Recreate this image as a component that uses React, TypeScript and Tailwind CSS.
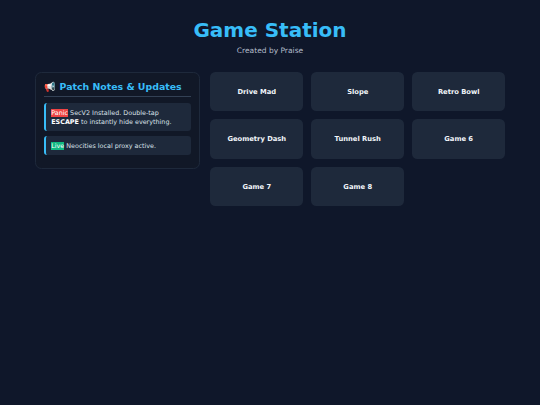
const games = [
  "Drive Mad",
  "Slope",
  "Retro Bowl",
  "Geometry Dash",
  "Tunnel Rush",
  "Game 6",
  "Game 7",
  "Game 8",
];

export default function App() {
  return (
    <div className="min-h-screen bg-[#0f172a] font-['DejaVu_Sans',sans-serif] text-[#f1f5f9]">
      {/* Header */}
      <header className="pt-[18px] text-center">
        <h1 className="text-[20px] leading-[24px] font-bold text-[#38bdf8]">Game Station</h1>
        <p className="mt-[3.5px] text-[7.5px] leading-[10px] text-[#b4bdca]">Created by Praise</p>
      </header>

      <main className="mx-auto mt-[16px] flex w-[469.5px] items-start gap-[10.5px]">
        {/* Patch Notes */}
        <aside className="h-[97.5px] w-[164.5px] shrink-0 rounded-[6.3px] border border-[#1e293b] bg-[#111827] px-[8px] pt-[7.5px]">
          <h2 className="border-b border-[#334155] pb-[2.5px] text-[9.4px] leading-[13px] font-bold whitespace-nowrap text-[#38bdf8]">
            📢 Patch Notes &amp; Updates
          </h2>
          <div className="mt-[6.5px] h-[28px] rounded-[3.2px] border-l-2 border-[#38bdf8] bg-[#1e293b] pt-[5.6px] pl-[5px] text-[6.4px] leading-[9px] whitespace-nowrap text-[#dbe2ea]">
            <span className="bg-[#ef4444] text-white">Panic</span> SecV2 Installed. Double-tap
            <br />
            <b className="text-white">ESCAPE</b> to instantly hide everything.
          </div>
          <div className="mt-[5px] h-[19px] rounded-[3.2px] border-l-2 border-[#38bdf8] bg-[#1e293b] pt-[5.6px] pl-[5px] text-[6.4px] leading-[9px] whitespace-nowrap text-[#dbe2ea]">
            <span className="bg-[#10b981] text-white">Live</span> Neocities local proxy active.
          </div>
        </aside>

        {/* Games */}
        <section className="grid flex-1 grid-cols-3 gap-[8.4px]">
          {games.map((game) => (
            <button
              key={game}
              className="h-[39.4px] rounded-[5.3px] bg-[#1e293b] pt-[1px] pl-[0.5px] text-center text-[6.75px] font-bold"
            >
              {game}
            </button>
          ))}
        </section>
      </main>
    </div>
  );
}
